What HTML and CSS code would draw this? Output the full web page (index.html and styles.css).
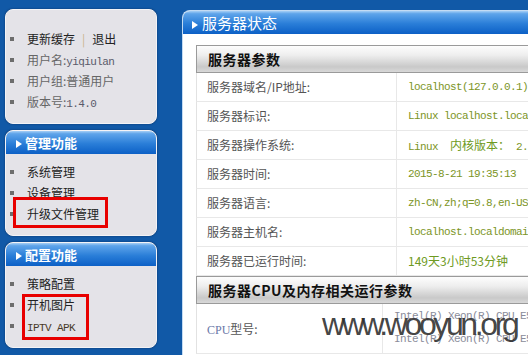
FILE: index.html
```html
<!DOCTYPE html>
<html lang="zh-CN">
<head>
    <meta charset="UTF-8">
    <title>服务器状态</title>
    <link rel="stylesheet" href="styles.css">
</head>
<body>

    <div class="page">
        <div class="sidebar">
            <div class="box box-user">
                <ul class="menu">
                    <li class="dark">更新缓存<span class="sep">|</span>退出</li>
                    <li>用户名:<span class="mono">yiqiulan</span></li>
                    <li>用户组:普通用户</li>
                    <li>版本号:<span class="mono">1.4.0</span></li>
                </ul>
            </div>

            <div class="box">
                <div class="box-head"><span class="arrow"></span>管理功能</div>
                <ul class="menu">
                    <li class="dark">系统管理</li>
                    <li class="dark">设备管理</li>
                    <li class="dark">升级文件管理</li>
                </ul>
                <div class="mark mark-upgrade"></div>
            </div>

            <div class="box">
                <div class="box-head"><span class="arrow"></span>配置功能</div>
                <ul class="menu">
                    <li class="dark">策略配置</li>
                    <li class="dark">开机图片</li>
                    <li class="dark"><span class="mono">IPTV APK</span></li>
                </ul>
                <div class="mark mark-boot"></div>
            </div>
        </div>

        <div class="main">
            <div class="main-head"><span class="arrow"></span>服务器状态</div>
            <div class="main-body">
                <div class="section">服务器参数</div>
                <div class="row">
                    <div class="label">服务器域名/IP地址:</div>
                    <div class="value mono">localhost(127.0.0.1)</div>
                </div>
                <div class="row">
                    <div class="label">服务器标识:</div>
                    <div class="value mono">Linux localhost.localdomain 2.6.32</div>
                </div>
                <div class="row">
                    <div class="label">服务器操作系统:</div>
                    <div class="value mono">Linux&nbsp;&nbsp;<span class="cjk">内核版本：</span> 2.6.32</div>
                </div>
                <div class="row">
                    <div class="label">服务器时间:</div>
                    <div class="value mono">2015-8-21 19:35:13</div>
                </div>
                <div class="row">
                    <div class="label">服务器语言:</div>
                    <div class="value mono">zh-CN,zh;q=0.8,en-US;q=0.6</div>
                </div>
                <div class="row">
                    <div class="label">服务器主机名:</div>
                    <div class="value mono">localhost.localdomain</div>
                </div>
                <div class="row">
                    <div class="label">服务器已运行时间:</div>
                    <div class="value">149天3小时53分钟</div>
                </div>

                <div class="section">服务器CPU及内存相关运行参数</div>
                <div class="row row-cpu">
                    <div class="label"><span class="latin">CPU</span>型号:</div>
                    <div class="value mono cpu">
                        Intel(R) Xeon(R) CPU E5-2620 0 @ 2.00GHz<br>
                        Intel(R) Xeon(R) CPU E5-2620 0 @ 2.00GHz
                    </div>
                </div>
            </div>
        </div>
    </div>

    <div class="watermark">www.wooyun.org</div>

</body>
</html>
```

FILE: styles.css
```css
body {
    margin: 0;
    background-color: #1159a7;
    font-family: "Noto Sans CJK SC", "Liberation Sans", sans-serif;
    font-size: 12px;
    color: #555;
    overflow: hidden;
    height: 355px;
}

.page {
    display: flex;
    align-items: flex-start;
    padding: 9px 0 0 5px;
}

.sidebar {
    width: 152px;
    flex-shrink: 0;
    display: flex;
    flex-direction: column;
    gap: 6px;
}

.box {
    position: relative;
    background-color: #e4e3e8;
    border: 1px solid #f3f3f6;
    border-radius: 8px;
    box-shadow: 0 0 2px rgba(0, 0, 20, 0.45);
    padding-bottom: 11px;
}

.box-user {
    padding-top: 18px;
}

.box-head {
    height: 23px;
    line-height: 23px;
    padding-left: 10px;
    border-radius: 7px 7px 0 0;
    background: linear-gradient(#a6cff5 0, #5ea4ea 12%, #2a7ed8 55%, #0c60c6 100%);
    color: #fff;
    font-size: 13px;
    font-weight: bold;
    margin-bottom: 7px;
}

.arrow {
    display: inline-block;
    width: 0;
    height: 0;
    border-left: 6px solid #fff;
    border-top: 4px solid transparent;
    border-bottom: 4px solid transparent;
    margin-right: 3px;
    vertical-align: 0;
}

.menu {
    list-style: none;
    margin: 0;
    padding: 0;
}

.menu li {
    position: relative;
    height: 21px;
    line-height: 21px;
    padding-left: 21px;
    color: #666;
    white-space: nowrap;
}

.menu li::before {
    content: "";
    position: absolute;
    left: 4px;
    top: 9px;
    width: 4px;
    height: 4px;
    background-color: #6d6d6d;
}

.menu li.dark {
    color: #222;
}

.sep {
    color: #c9b38e;
    margin: 0 7px;
}

.mono {
    font-family: "Liberation Mono", monospace;
    font-size: 11px;
    letter-spacing: -0.6px;
}

.menu .mono {
    color: #5a5a6a;
}

.menu .dark .mono {
    color: #4a3a2a;
}

/* red annotation boxes */
.mark {
    position: absolute;
    box-sizing: border-box;
    border: 3px solid #e80000;
}

.mark-upgrade {
    top: 66px;
    left: 7px;
    width: 95px;
    height: 31px;
}

.mark-boot {
    top: 51px;
    left: 16px;
    width: 67px;
    height: 46px;
}

/* main panel */
.main {
    margin-left: 25px;
    margin-top: 1px;
    width: 620px;
    flex-shrink: 0;
    background-color: #fff;
    border-left: 1px solid #c3dbf3;
    border-top: 1px solid #c3dbf3;
    border-radius: 8px 0 0 0;
    height: 400px;
}

.main-head {
    height: 23px;
    line-height: 23px;
    padding-left: 9px;
    border-radius: 7px 0 0 0;
    background: linear-gradient(#a6cff5 0, #5ea4ea 12%, #2a7ed8 55%, #0c60c6 100%);
    color: #fff;
    font-size: 15px;
}

.main-head .arrow {
    border-left-width: 6px;
    border-top-width: 4.5px;
    border-bottom-width: 4.5px;
    margin-right: 4px;
}

.main-body {
    padding: 11px 0 0 13px;
}

.section {
    height: 28px;
    box-sizing: border-box;
    line-height: 26px;
    border: 1px solid #9a9a9a;
    padding-left: 11px;
    background: linear-gradient(#fdfdfd 0, #eeeeee 35%, #c9c9c9 80%, #d8d8d8 100%);
    color: #111;
    font-size: 14px;
    font-weight: bold;
    letter-spacing: 0.5px;
}

.row {
    display: flex;
    height: 29px;
    box-sizing: border-box;
    border-left: 1px solid #e2e2e2;
    border-bottom: 1px solid #e8e8e8;
}

.label {
    width: 200px;
    flex-shrink: 0;
    box-sizing: border-box;
    padding-left: 10px;
    border-right: 1px solid #e8e8e8;
    line-height: 28px;
    color: #555;
    white-space: nowrap;
}

.value {
    padding-left: 11px;
    line-height: 28px;
    color: #6e9a22;
    white-space: nowrap;
}

.value.mono {
    color: #7c9526;
}

.cjk {
    font-family: "Noto Sans CJK SC", sans-serif;
    font-size: 12px;
    letter-spacing: 0;
    color: #6e9a22;
}

.latin {
    font-family: "Liberation Serif", serif;
    color: #6a78a8;
}

.row-cpu {
    height: 50px;
}

.row-cpu .label {
    width: 186px;
    line-height: 49px;
}

.value.cpu {
    padding-top: 1px;
    line-height: 23px;
    color: #8a8c9a;
}

/* watermark on the screenshot */
.watermark {
    position: absolute;
    left: 322px;
    top: 308px;
    font-family: "Liberation Sans", Arial, sans-serif;
    font-size: 32px;
    line-height: 32px;
    letter-spacing: -3.4px;
    color: rgba(45, 45, 45, 0.9);
}
```
